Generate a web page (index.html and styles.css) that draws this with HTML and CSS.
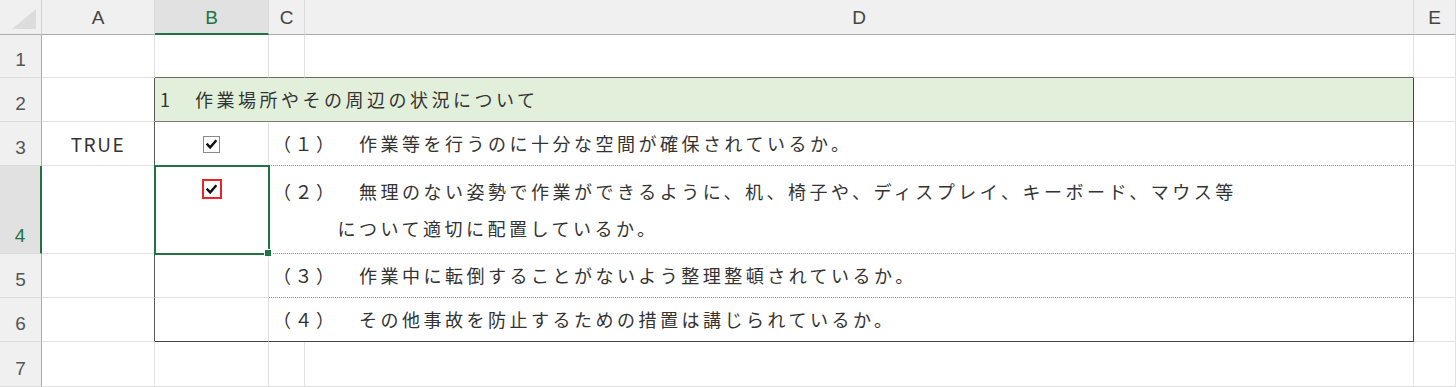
FILE: index.html
```html
<!DOCTYPE html>
<html lang="ja">
<head>
    <meta charset="UTF-8">
    <meta name="viewport" content="width=device-width, initial-scale=1.0">
    <title>作業環境チェックリスト</title>
    <link rel="stylesheet" href="styles.css">
</head>
<body>
    <div class="sheet">
        <!-- header row -->
        <div class="corner">
            <svg width="30" height="24" viewBox="0 0 30 24"><polygon points="28,2 28,22 4,22" fill="#dcdcdc"/></svg>
        </div>
        <div class="col-head">A</div>
        <div class="col-head active">B</div>
        <div class="col-head">C</div>
        <div class="col-head">D</div>
        <div class="col-head">E</div>

        <!-- row 1 -->
        <div class="row-head">1</div>
        <div class="cell"></div>
        <div class="cell top-edge"></div>
        <div class="cell top-edge"></div>
        <div class="cell top-edge"></div>
        <div class="cell"></div>

        <!-- row 2 -->
        <div class="row-head">2</div>
        <div class="cell left-edge"></div>
        <div class="cell section">1　作業場所やその周辺の状況について</div>
        <div class="cell"></div>

        <!-- row 3 -->
        <div class="row-head">3</div>
        <div class="cell left-edge center">TRUE</div>
        <div class="cell box-cell"><span class="check"><svg width="13" height="13" viewBox="0 0 13 13"><path d="M2.5 6.5 L5.2 9.4 L10.6 3.2" fill="none" stroke="#111" stroke-width="2.4" stroke-linecap="square"/></svg></span></div>
        <div class="cell item dotted">（１）<span class="gap">　</span>作業等を行うのに十分な空間が確保されているか。</div>
        <div class="cell"></div>

        <!-- row 4 -->
        <div class="row-head active">4</div>
        <div class="cell left-edge"></div>
        <div class="cell box-cell selected top"><span class="check marked"><svg width="13" height="13" viewBox="0 0 13 13"><path d="M2.5 6.5 L5.2 9.4 L10.6 3.2" fill="none" stroke="#111" stroke-width="2.4" stroke-linecap="square"/></svg></span></div>
        <div class="cell item dotted wrap">（２）<span class="gap">　</span>無理のない姿勢で作業ができるように、机、椅子や、ディスプレイ、キーボード、マウス等<br>　　　について適切に配置しているか。</div>
        <div class="cell"></div>

        <!-- row 5 -->
        <div class="row-head">5</div>
        <div class="cell left-edge"></div>
        <div class="cell box-cell"></div>
        <div class="cell item dotted">（３）<span class="gap">　</span>作業中に転倒することがないよう整理整頓されているか。</div>
        <div class="cell"></div>

        <!-- row 6 -->
        <div class="row-head">6</div>
        <div class="cell left-edge"></div>
        <div class="cell box-cell bottom-edge"></div>
        <div class="cell item bottom-edge">（４）<span class="gap">　</span>その他事故を防止するための措置は講じられているか。</div>
        <div class="cell"></div>

        <!-- row 7 -->
        <div class="row-head">7</div>
        <div class="cell"></div>
        <div class="cell"></div>
        <div class="cell"></div>
        <div class="cell"></div>
        <div class="cell"></div>
    </div>
</body>
</html>
```

FILE: styles.css
```css
html, body {
    margin: 0;
    padding: 0;
    background: #ffffff;
    overflow: hidden;
}
body {
    font-family: "Noto Sans CJK JP", "Noto Sans", sans-serif;
    color: #333333;
}
.sheet {
    display: grid;
    grid-template-columns: 42px 113px 114px 36px 1109px 42px;
    grid-template-rows: 35px 43px 44px 44px 88px 44px 44px 45px;
    width: 1456px;
    height: 387px;
}
.sheet > div {
    box-sizing: border-box;
}

/* headers */
.corner {
    background: #f0f0f0;
    border-right: 1px solid #d0d0d0;
    border-bottom: 1px solid #ababab;
    display: flex;
    align-items: flex-end;
    justify-content: flex-end;
    padding: 0 3px 3px 0;
}
.col-head {
    background: #f0f0f0;
    border-right: 1px solid #dadada;
    border-bottom: 1px solid #ababab;
    display: flex;
    align-items: center;
    justify-content: center;
    font-family: "Liberation Sans", "Noto Sans", sans-serif;
    font-size: 19px;
    color: #444444;
    padding-top: 2px;
}
.col-head.active {
    background: #e1e1e1;
    color: #217346;
    border-bottom: 2px solid #217346;
}
.row-head {
    background: #f0f0f0;
    border-right: 1px solid #ababab;
    border-bottom: 1px solid #dadada;
    display: flex;
    align-items: flex-end;
    justify-content: center;
    padding-bottom: 6px;
    font-family: "Liberation Sans", "Noto Sans", sans-serif;
    font-size: 19px;
    color: #555555;
}
.row-head.active {
    background: #e1e1e1;
    color: #217346;
    border-right: 2px solid #217346;
}

/* cells */
.cell {
    border-right: 1px solid #e1e1e1;
    border-bottom: 1px solid #e1e1e1;
    font-size: 18px;
    letter-spacing: 3.5px;
    white-space: nowrap;
    line-height: 43px;
    padding-left: 4px;
}
.cell.center {
    text-align: center;
    padding-left: 0;
    font-size: 19px;
    letter-spacing: 1.6px;
}
.gap {
    margin-right: 9px;
}
.top-edge {
    border-bottom-color: #6a6a6a;
}
.left-edge {
    border-right-color: #5a5a5a;
}
.bottom-edge {
    border-bottom-color: #444444;
}
.section {
    grid-column: span 3;
    background: #e2efda;
    border-bottom-color: #7a7a7a;
    border-right-color: #444444;
    padding-left: 5px;
}
.item {
    grid-column: span 2;
    border-right-color: #444444;
}
.item.dotted {
    border-bottom: 1px dotted #8c8c8c;
}
.item.wrap {
    line-height: 37px;
    padding-top: 7px;
}

/* check boxes */
.box-cell {
    display: flex;
    align-items: center;
    justify-content: center;
    padding-left: 0;
}
.box-cell.top {
    align-items: flex-start;
    padding-top: 13px;
}
.check {
    width: 17px;
    height: 17px;
    box-sizing: border-box;
    border: 1px solid #8a8a8a;
    background: #ffffff;
    display: flex;
    align-items: center;
    justify-content: center;
    margin-top: 2px;
}
.check.marked {
    width: 20px;
    height: 20px;
    border: 2px solid #e8232a;
    margin-top: 0;
}
.selected {
    position: relative;
    outline: 2px solid #217346;
    outline-offset: -1px;
}
.selected::after {
    content: "";
    position: absolute;
    right: -4px;
    bottom: -4px;
    width: 6px;
    height: 6px;
    background: #217346;
    border: 1px solid #ffffff;
}
```
